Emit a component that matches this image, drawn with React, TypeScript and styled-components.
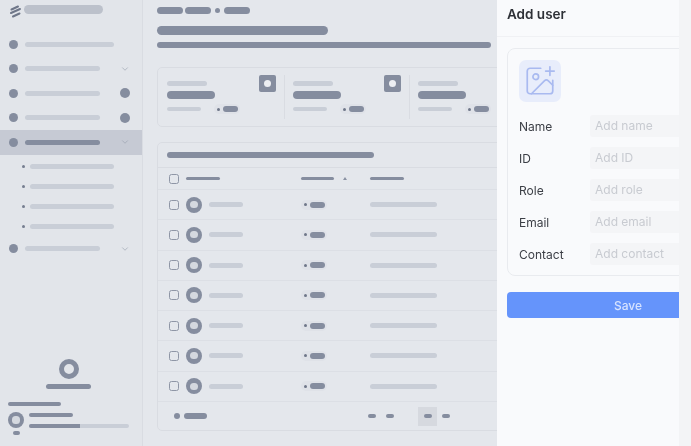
import React from "react";
import styled, { createGlobalStyle } from "styled-components";
import { ChevronDown, ImagePlus } from "lucide-react";

const Global = createGlobalStyle`
  html, body { margin: 0; padding: 0; background: #e4e7ec; }
  body { font-family: Inter, "Liberation Sans", sans-serif; }
  #root { width: 691px; height: 446px; overflow: hidden; }
`;

const DARK = "#858d9f";
const LIGHT = "#c9ced7";

const Page = styled.div`
  position: relative;
  width: 691px;
  height: 446px;
  display: flex;
  overflow: hidden;
  background: #e4e7ec;
`;

const Backdrop = styled.div`
  display: flex;
  width: 691px;
  height: 446px;
  filter: blur(0.55px);
`;

const Sidebar = styled.aside`
  width: 143px;
  flex: none;
  box-sizing: border-box;
  height: 446px;
  background: #e2e5ea;
  border-right: 1px solid #d9dce2;
  display: flex;
  flex-direction: column;
`;

const Brand = styled.div`
  display: flex;
  align-items: flex-start;
  gap: 2px;
  padding: 5px 0 0 9px;
  height: 32px;
  box-sizing: border-box;
`;

const BrandBar = styled.div`
  width: 79px;
  height: 9px;
  border-radius: 5px;
  background: #bcc1cb;
`;

const Bar = styled.div<{ $w: number; $h?: number; $dark?: boolean }>`
  flex: none;
  width: ${(p) => p.$w}px;
  height: ${(p) => p.$h ?? 5}px;
  border-radius: 4px;
  background: ${(p) => (p.$dark ? DARK : LIGHT)};
`;

const NavRow = styled.div<{ $active?: boolean }>`
  height: 24.5px;
  display: flex;
  align-items: center;
  padding-left: 9px;
  background: ${(p) => (p.$active ? "#c6cad4" : "transparent")};
`;

const NavDot = styled.div`
  width: 9px;
  height: 9px;
  border-radius: 50%;
  background: ${DARK};
  margin-right: 7px;
  flex: none;
`;

const NavTail = styled.div`
  margin-left: auto;
  width: 34px;
  padding-right: 1px;
  box-sizing: border-box;
  display: flex;
  justify-content: center;
  color: #9aa1af;
`;

const Badge = styled.div`
  width: 10px;
  height: 10px;
  border-radius: 50%;
  background: ${DARK};
`;

const SubList = styled.div`
  display: flex;
  flex-direction: column;
  gap: 15px;
  padding: 9px 0 8px 22px;
`;

const SubRow = styled.div`
  display: flex;
  align-items: center;
  gap: 5px;
  height: 5px;
`;

const SubDot = styled.div`
  width: 3px;
  height: 3px;
  border-radius: 50%;
  background: #767e90;
`;

const Upgrade = styled.div`
  margin-top: auto;
  display: flex;
  flex-direction: column;
  align-items: center;
  width: 137px;
  gap: 5px;
`;

const Ring = styled.div`
  width: 20px;
  height: 20px;
  box-sizing: border-box;
  border: 5px solid ${DARK};
  border-radius: 50%;
`;

const Account = styled.div`
  padding: 13px 13px 11px 8px;
  display: flex;
  flex-direction: column;
  gap: 6px;
`;

const AccountBody = styled.div`
  display: flex;
  gap: 5px;
`;

const AccountAvatar = styled.div`
  display: flex;
  flex-direction: column;
  align-items: center;
  gap: 3px;
  width: 16px;
`;

const AccountBars = styled.div`
  display: flex;
  flex-direction: column;
  gap: 7px;
  padding-top: 1px;
`;

const Progress = styled.div`
  width: 100px;
  height: 4px;
  border-radius: 3px;
  background: ${LIGHT};
  overflow: hidden;
`;

const ProgressFill = styled.div`
  width: 51px;
  height: 4px;
  background: ${DARK};
`;

const Avatar = styled.div<{ $size: number }>`
  width: ${(p) => p.$size}px;
  height: ${(p) => p.$size}px;
  border-radius: 50%;
  background: ${DARK};
  display: flex;
  align-items: center;
  justify-content: center;
  flex: none;
  &::after {
    content: "";
    width: ${(p) => p.$size * 0.44}px;
    height: ${(p) => p.$size * 0.44}px;
    border-radius: 50%;
    background: #d4d8df;
  }
`;

const Main = styled.main`
  flex: 1;
  min-width: 0;
  padding: 7px 0 0 14px;
  overflow: hidden;
`;

const Crumbs = styled.div`
  display: flex;
  align-items: center;
  gap: 2px;
  height: 7px;
`;

const CrumbDot = styled.div`
  width: 5px;
  height: 5px;
  border-radius: 50%;
  background: ${DARK};
  margin: 0 2px;
`;

const Title = styled.div`
  width: 171px;
  height: 9px;
  border-radius: 5px;
  background: ${DARK};
  margin-top: 12px;
`;

const Subtitle = styled.div`
  width: 334px;
  height: 6px;
  border-radius: 3px;
  background: ${DARK};
  margin-top: 7px;
`;

const StatsCard = styled.section`
  width: 400px;
  height: 60px;
  box-sizing: border-box;
  margin-top: 19px;
  border: 1px solid #d9dce2;
  border-radius: 5px;
  display: flex;
  padding: 7px 0 7px 1px;
`;

const Stat = styled.div`
  width: 125.5px;
  flex: none;
  box-sizing: border-box;
  padding: 6px 8px 0 8px;
  border-right: 1px solid #d9dce2;
  display: flex;
  justify-content: space-between;
  &:last-child { border-right: none; }
`;

const StatText = styled.div`
  display: flex;
  flex-direction: column;
  gap: 5px;
`;

const StatFoot = styled.div`
  display: flex;
  align-items: center;
  gap: 13px;
`;

const Pill = styled.div`
  display: flex;
  align-items: center;
  gap: 3px;
  padding: 2px 2px 2px 3px;
  border-radius: 5px;
  background: #dfe2e8;
`;

const PillCell = styled.div`
  display: flex;
`;

const PillDot = styled.div`
  width: 3px;
  height: 3px;
  border-radius: 50%;
  background: #6f7789;
`;

const StatIcon = styled.div`
  width: 17px;
  height: 17px;
  margin-top: -6px;
  border-radius: 2px;
  background: ${DARK};
  display: flex;
  align-items: center;
  justify-content: center;
  flex: none;
  &::after {
    content: "";
    width: 7px;
    height: 7px;
    border-radius: 50%;
    background: #eceef2;
  }
`;

const TableCard = styled.section`
  width: 400px;
  height: 289px;
  box-sizing: border-box;
  margin-top: 15px;
  border: 1px solid #d9dce2;
  border-radius: 5px;
`;

const TableTitle = styled.div`
  height: 25px;
  box-sizing: border-box;
  padding: 9px 0 0 9px;
  border-bottom: 1px solid #d9dce2;
`;

const Row = styled.div<{ $h: number }>`
  height: ${(p) => p.$h}px;
  box-sizing: border-box;
  display: grid;
  grid-template-columns: 132px 69px 1fr;
  align-items: center;
  padding-left: 11px;
  border-bottom: 1px solid #dcdfe5;
`;

const NameCell = styled.div`
  display: flex;
  align-items: center;
  gap: 7px;
`;

const Check = styled.div`
  width: 10px;
  height: 10px;
  box-sizing: border-box;
  border: 1.5px solid #8f96a6;
  border-radius: 2.5px;
  flex: none;
`;

const HeadCell = styled.div`
  display: flex;
  align-items: center;
  gap: 9px;
`;

const SortMark = styled.div`
  width: 0;
  height: 0;
  border-left: 2px solid transparent;
  border-right: 2px solid transparent;
  border-bottom: 3px solid #8a92a3;
`;

const TableFoot = styled.div`
  height: 29px;
  display: flex;
  align-items: center;
  padding-left: 16px;
`;

const FootDot = styled.div`
  width: 6px;
  height: 6px;
  border-radius: 50%;
  background: ${DARK};
  margin-right: 4px;
`;

const Pager = styled.div`
  margin-left: 161px;
  display: flex;
  align-items: center;
`;

const PageItem = styled.div`
  width: 19px;
  height: 19px;
  margin: 0 5px 0 24px;
  display: flex;
  align-items: center;
  justify-content: center;
  background: #d6d9df;
`;

const PageNumber = styled(Bar)`
  & + & {
    margin-left: 10px;
  }
`;

const Drawer = styled.aside`
  position: absolute;
  left: 497px;
  top: 0;
  bottom: 0;
  width: 182px;
  overflow: hidden;
  background: #f9fafc;
  color: #33363c;
`;

const Stripe = styled.div`
  position: absolute;
  left: 679px;
  top: 0;
  bottom: 0;
  width: 12px;
  background: #f3f4f6;
`;

const DrawerInner = styled.div`
  width: 264px;
  filter: blur(0.35px);
`;

const DrawerHead = styled.header`
  height: 37px;
  box-sizing: border-box;
  padding: 6px 0 0 10px;
  border-bottom: 1px solid #f0f1f4;
  font-size: 13.5px;
  font-weight: 600;
  line-height: 16px;
  color: #2e3137;
`;

const Form = styled.form`
  margin: 11px 0 0 10px;
  width: 242px;
  height: 228px;
  box-sizing: border-box;
  border: 1px solid #e9ebef;
  border-radius: 8px;
  padding: 11px 11px 0;
`;

const Tile = styled.div`
  width: 42px;
  height: 42px;
  border-radius: 7px;
  background: #e8edfb;
  color: #a9baf0;
  display: flex;
  align-items: center;
  justify-content: center;
  margin-bottom: 8px;
`;

const Field = styled.div`
  height: 32px;
  display: flex;
  align-items: center;
  font-size: 12px;
  color: #3c3f46;
`;

const FieldLabel = styled.label`
  width: 71px;
  flex: none;
`;

const FieldInput = styled.div`
  width: 140px;
  height: 22px;
  box-sizing: border-box;
  padding: 0 5px;
  border-radius: 3px;
  background: #f4f5f7;
  color: #c8cbd1;
  font-size: 12px;
  line-height: 21px;
`;

const Save = styled.button`
  display: block;
  margin: 16px 0 0 10px;
  width: 242px;
  height: 26px;
  border: none;
  border-radius: 4px;
  background: #6594fb;
  color: #d7e3ff;
  font: 500 12px Inter, "Liberation Sans", sans-serif;
`;

const BrandMark = () => (
  <svg width="13" height="13" viewBox="0 0 13 13" fill="none" stroke="#6f7789" strokeWidth="2" strokeLinecap="round">
    <path d="M2.5 4.5 L9 1.5 M2 8 L11 4 M4 11.5 L10.5 8.5" />
  </svg>
);

const nav = [{ tail: null }, { tail: "chev" }, { tail: "badge" }, { tail: "badge" }];

const fields = [
  ["Name", "Add name"],
  ["ID", "Add ID"],
  ["Role", "Add role"],
  ["Email", "Add email"],
  ["Contact", "Add contact"],
];

const Tail = ({ kind }: { kind: string | null }) => (
  <NavTail>
    {kind === "chev" && <ChevronDown size={10} strokeWidth={1.6} />}
    {kind === "badge" && <Badge />}
  </NavTail>
);

const StatBlock = () => (
  <Stat>
    <StatText>
      <Bar $w={40} />
      <Bar $w={48} $h={8} $dark />
      <StatFoot>
        <Bar $w={34} $h={4} />
        <Pill>
          <PillDot />
          <Bar $w={15} $h={6} $dark />
        </Pill>
      </StatFoot>
    </StatText>
    <StatIcon />
  </Stat>
);

export default function App() {
  return (
    <Page>
      <Global />
      <Backdrop>
        <Sidebar>
          <Brand>
            <BrandMark />
            <BrandBar />
          </Brand>
          {nav.map((n, i) => (
            <NavRow key={i}>
              <NavDot />
              <Bar $w={i === 0 ? 89 : 75} />
              <Tail kind={n.tail} />
            </NavRow>
          ))}
          <NavRow $active>
            <NavDot />
            <Bar $w={75} $dark />
            <Tail kind="chev" />
          </NavRow>
          <SubList>
            {[0, 1, 2, 3].map((i) => (
              <SubRow key={i}>
                <SubDot />
                <Bar $w={84} />
              </SubRow>
            ))}
          </SubList>
          <NavRow>
            <NavDot />
            <Bar $w={75} />
            <Tail kind="chev" />
          </NavRow>
          <Upgrade>
            <Ring />
            <Bar $w={45} $dark />
          </Upgrade>
          <Account>
            <Bar $w={53} $h={4} $dark />
            <AccountBody>
              <AccountAvatar>
                <Avatar $size={16} />
                <Bar $w={7} $h={4} $dark />
              </AccountAvatar>
              <AccountBars>
                <Bar $w={44} $h={4} $dark />
                <Progress>
                  <ProgressFill />
                </Progress>
              </AccountBars>
            </AccountBody>
          </Account>
        </Sidebar>
        <Main>
          <Crumbs>
            <Bar $w={26} $h={7} $dark />
            <Bar $w={26} $h={7} $dark />
            <CrumbDot />
            <Bar $w={26} $h={7} $dark />
          </Crumbs>
          <Title />
          <Subtitle />
          <StatsCard>
            <StatBlock />
            <StatBlock />
            <StatBlock />
          </StatsCard>
          <TableCard>
            <TableTitle>
              <Bar $w={207} $h={6} $dark />
            </TableTitle>
            <Row $h={22}>
              <NameCell>
                <Check />
                <Bar $w={34} $h={3} $dark />
              </NameCell>
              <HeadCell>
                <Bar $w={33} $h={3} $dark />
                <SortMark />
              </HeadCell>
              <Bar $w={34} $h={3} $dark />
            </Row>
            {[0, 1, 2, 3, 4, 5, 6].map((i) => (
              <Row key={i} $h={30.25}>
                <NameCell>
                  <Check />
                  <Avatar $size={16} />
                  <Bar $w={34} />
                </NameCell>
                <PillCell>
                  <Pill>
                    <PillDot />
                    <Bar $w={15} $h={6} $dark />
                  </Pill>
                </PillCell>
                <Bar $w={67} />
              </Row>
            ))}
            <TableFoot>
              <FootDot />
              <Bar $w={23} $h={6} $dark />
              <Pager>
                <PageNumber $w={8} $h={4} $dark />
                <PageNumber $w={8} $h={4} $dark />
                <PageItem>
                  <Bar $w={8} $h={4} $dark />
                </PageItem>
                <Bar $w={8} $h={4} $dark />
              </Pager>
            </TableFoot>
          </TableCard>
        </Main>
      </Backdrop>
      <Drawer>
        <DrawerInner>
          <DrawerHead>Add user</DrawerHead>
          <Form>
            <Tile>
              <ImagePlus size={34} strokeWidth={1.2} />
            </Tile>
            {fields.map(([label, ph]) => (
              <Field key={label}>
                <FieldLabel>{label}</FieldLabel>
                <FieldInput>{ph}</FieldInput>
              </Field>
            ))}
          </Form>
          <Save type="button">Save</Save>
        </DrawerInner>
      </Drawer>
      <Stripe />
    </Page>
  );
}
